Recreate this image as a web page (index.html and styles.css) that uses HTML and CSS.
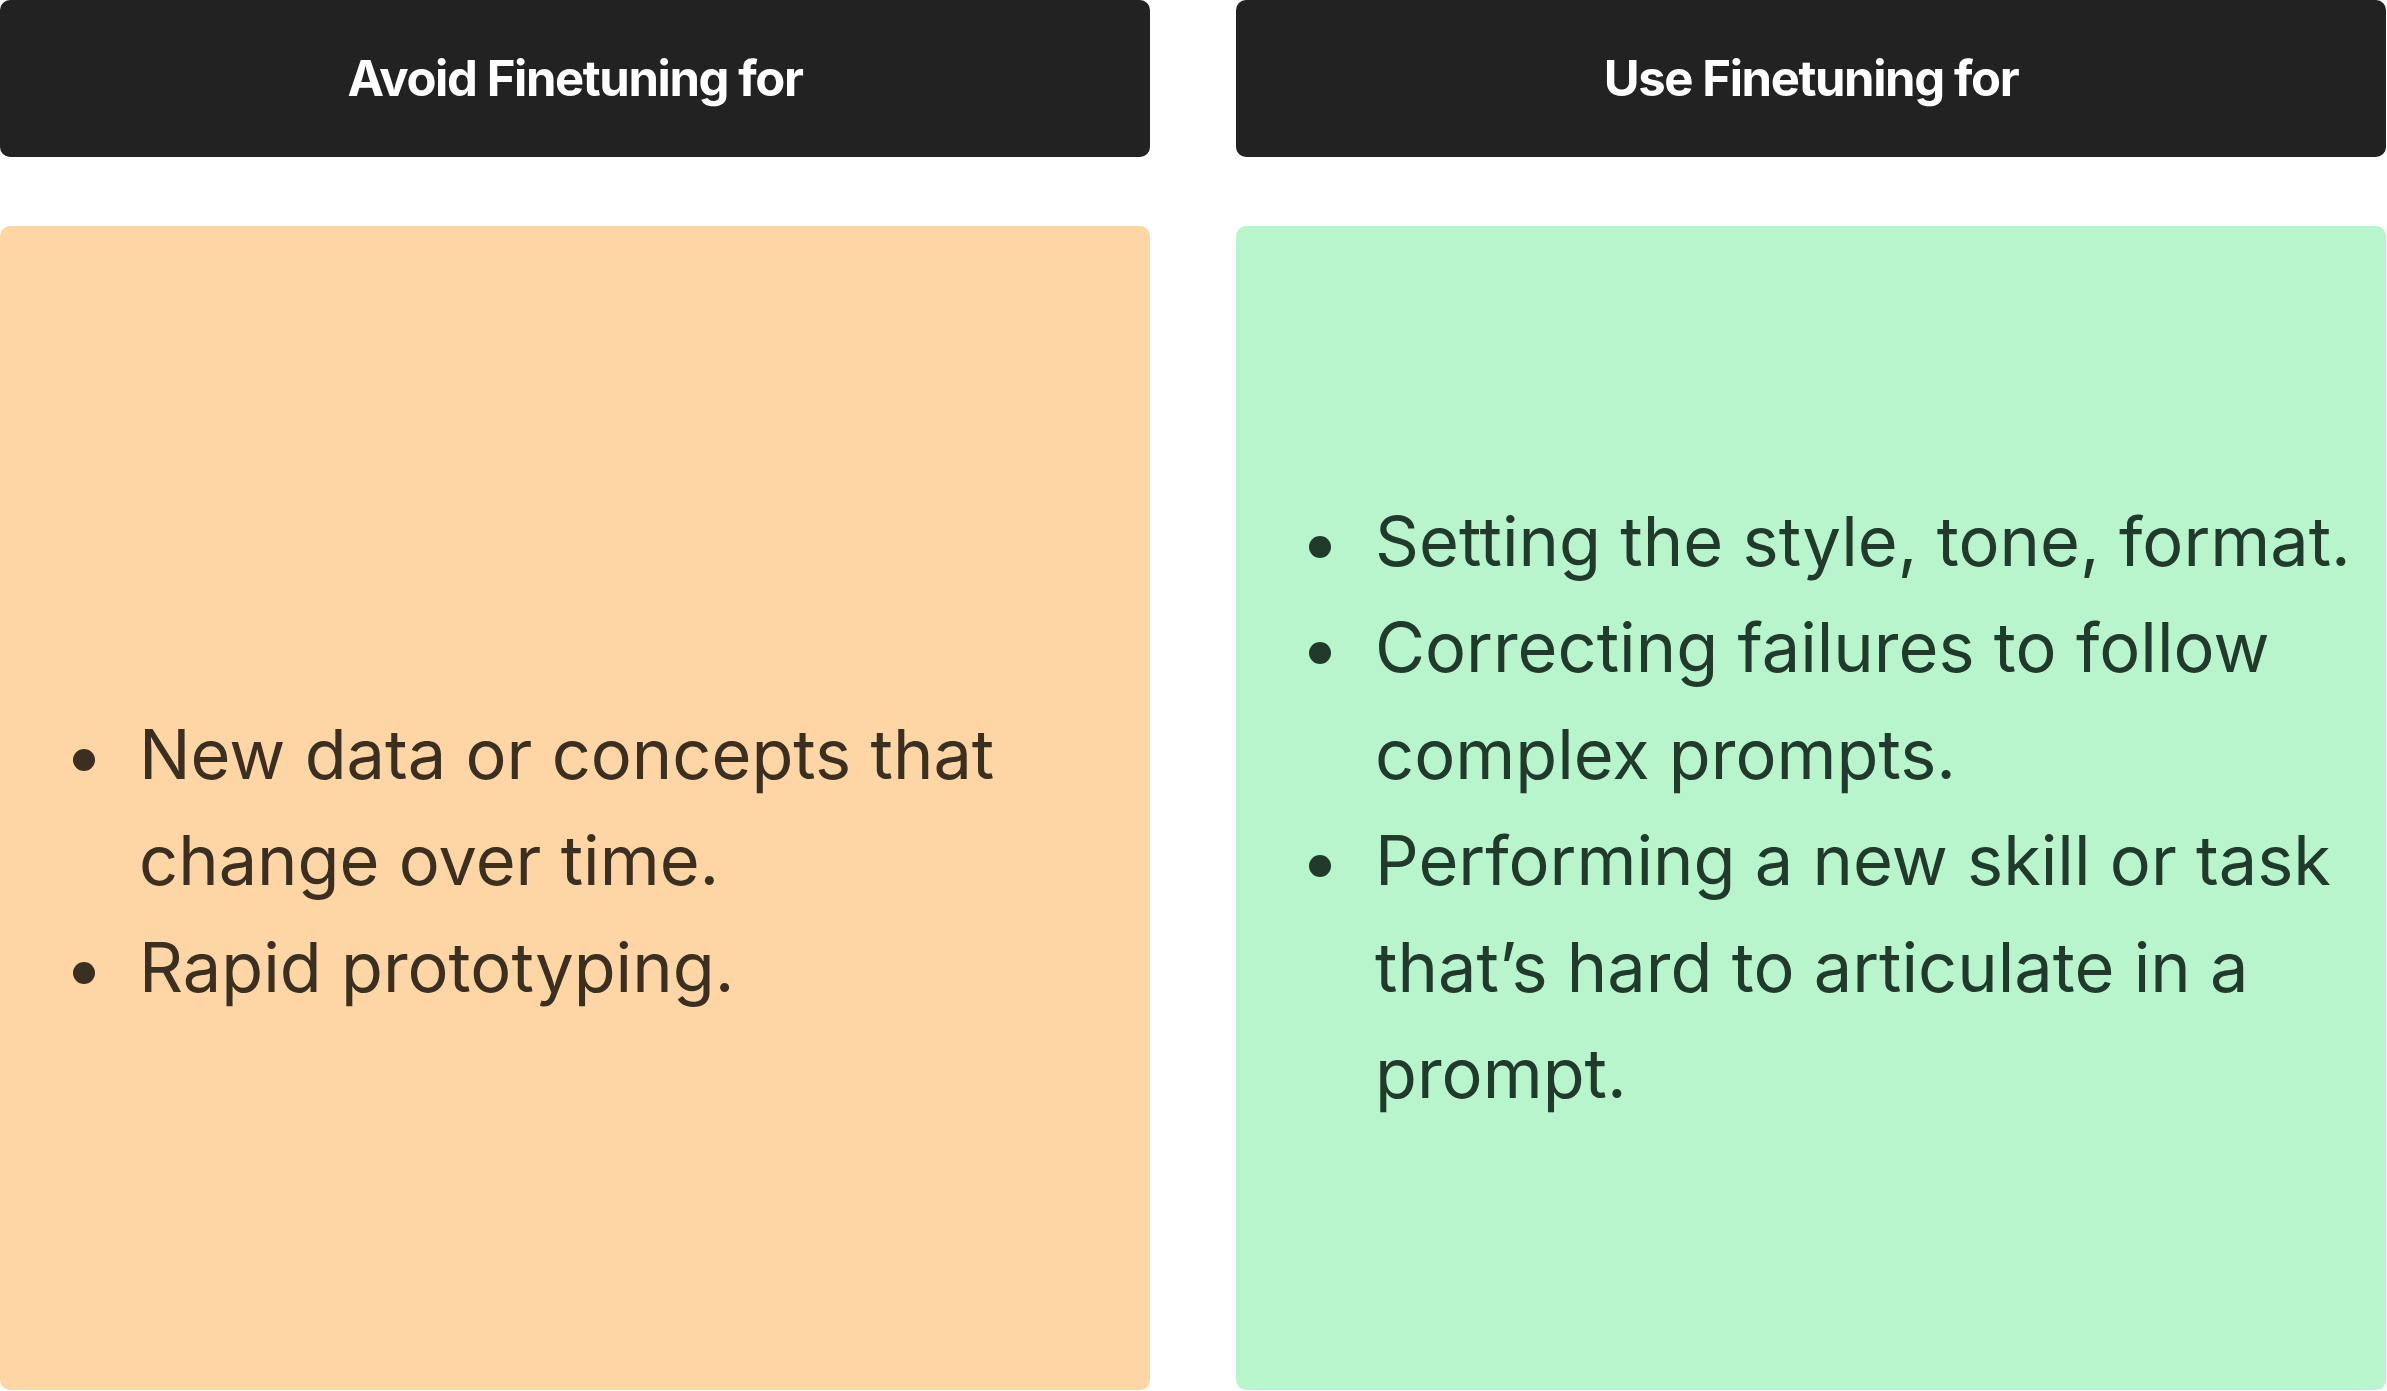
FILE: index.html
```html
<!DOCTYPE html>
<html>
<head>
<meta charset="utf-8">
<link rel="stylesheet" href="styles.css">
</head>
<body>
<div class="board">
  <div class="column">
    <div class="header">Avoid Finetuning for</div>
    <div class="card card-avoid">
      <ul class="list list-offset">
        <li>New data or concepts that change over time.</li>
        <li>Rapid prototyping.</li>
      </ul>
    </div>
  </div>
  <div class="column">
    <div class="header">Use Finetuning for</div>
    <div class="card card-use">
      <ul class="list">
        <li>Setting the style, tone, format.</li>
        <li>Correcting failures to follow complex prompts.</li>
        <li>Performing a new skill or task that’s hard to articulate in a prompt.</li>
      </ul>
    </div>
  </div>
</div>
</body>
</html>
```

FILE: styles.css
```css
html, body {
  margin: 0;
  padding: 0;
  background: #ffffff;
}
body {
  font-family: Inter, "Noto Sans", sans-serif;
}
.board {
  display: grid;
  grid-template-columns: 1150px 1150px;
  column-gap: 86px;
  width: 2387px;
  height: 1391px;
}
.column {
  display: flex;
  flex-direction: column;
  gap: 69px;
  height: 1390px;
}
.header {
  height: 157px;
  flex: 0 0 157px;
  background: #222222;
  border-radius: 10px;
  color: #ffffff;
  font-weight: 700;
  font-size: 49px;
  letter-spacing: -1.4px;
  display: flex;
  align-items: center;
  justify-content: center;
}
.card {
  flex: 1;
  border-radius: 10px;
  display: flex;
  flex-direction: column;
  justify-content: center;
  padding: 0 20px 0 73px;
}
.card-avoid {
  background: #fed5a4;
  color: #3a2f20;
}
.card-use {
  background: #b8f5cd;
  color: #213a2b;
}
.list {
  list-style: none;
  margin: 0;
  padding: 0;
  font-size: 68.5px;
  line-height: 106.5px;
  letter-spacing: 0;
}
.list-offset {
  padding-top: 106.5px;
}
.list li {
  display: flex;
  align-items: flex-start;
}
.list li::before {
  content: "";
  flex: 0 0 22px;
  width: 22px;
  height: 22px;
  border-radius: 50%;
  background: currentColor;
  margin-top: 47px;
  margin-right: 44px;
}
```
